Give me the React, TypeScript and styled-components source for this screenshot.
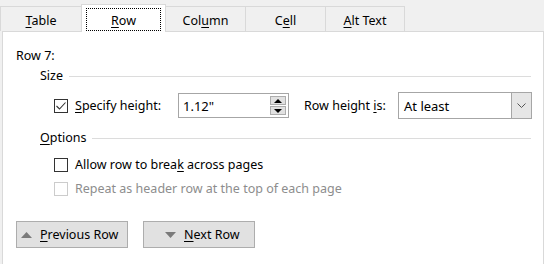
import { createGlobalStyle } from "styled-components";
import styled from "styled-components";

const Global = createGlobalStyle`
  body {
    margin: 0;
    background: #f0f0f0;
    font-family: "Noto Sans", "Open Sans", sans-serif;
    font-size: 12.5px;
    color: #000;
  }
  u {
    text-decoration: underline;
    text-underline-offset: 2px;
    text-decoration-thickness: 1px;
  }
`;

const Dialog = styled.div`
  width: 544px;
  height: 264px;
  overflow: hidden;
  background: #f0f0f0;
`;

const TabBar = styled.div`
  display: flex;
  align-items: flex-end;
  height: 31px;
`;

const Tab = styled.div<{ $w: number; $active?: boolean }>`
  position: relative;
  box-sizing: border-box;
  width: ${(p) => p.$w}px;
  height: ${(p) => (p.$active ? 28 : 25)}px;
  margin-bottom: ${(p) => (p.$active ? -1 : 0)}px;
  margin-right: -1px;
  border: 1px solid #d9d9d9;
  border-bottom: none;
  background: ${(p) => (p.$active ? "#fff" : "#f0f0f0")};
  z-index: ${(p) => (p.$active ? 2 : 1)};
  display: flex;
  align-items: center;
  justify-content: center;
  padding: ${(p) => (p.$active ? "3px 4px 1px" : "3px 0 0")};
`;

const Focus = styled.span`
  flex: 1;
  align-self: stretch;
  border: 1px dotted #000;
  display: flex;
  align-items: center;
  justify-content: center;
  padding-top: 1px;
`;

const Panel = styled.div`
  margin-left: 2px;
  height: 260px;
  border: 1px solid #d9d9d9;
  background: #fff;
  padding: 16px 0 0 13px;
`;

const Title = styled.div`
  line-height: 16px;
`;

const Group = styled.div`
  display: flex;
  align-items: center;
  line-height: 16px;
  margin-left: 24px;
  width: 491px;
  &::after {
    content: "";
    flex: 1;
    height: 1px;
    margin-left: 6px;
    margin-top: 1px;
    background: #dcdcdc;
  }
`;

const SizeRow = styled.div`
  display: flex;
  align-items: center;
  height: 27px;
  margin: 8px 0 0 38px;
`;

const Check = styled.label<{ $w?: number; $disabled?: boolean }>`
  display: flex;
  align-items: center;
  gap: 7px;
  width: ${(p) => (p.$w ? `${p.$w}px` : "auto")};
  color: ${(p) => (p.$disabled ? "#8d8d8d" : "#000")};
  line-height: 16px;
`;

const Box = styled.span<{ $disabled?: boolean }>`
  box-sizing: border-box;
  width: 14px;
  height: 14px;
  border: 1px solid ${(p) => (p.$disabled ? "#cccccc" : "#333333")};
  background: #fff;
  display: flex;
  align-items: center;
  justify-content: center;
`;

const Spin = styled.div`
  box-sizing: border-box;
  width: 111px;
  height: 25px;
  border: 1px solid #a6a6a6;
  display: flex;
  align-items: center;
  padding: 0 2px 0 4px;
`;

const SpinText = styled.span`
  flex: 1;
  font-size: 13px;
`;

const SpinButtons = styled.div`
  display: flex;
  flex-direction: column;
  gap: 1px;
`;

const SpinButton = styled.div`
  box-sizing: border-box;
  width: 16px;
  height: 9px;
  background: #e1e1e1;
  border: 1px solid #adadad;
  display: flex;
  align-items: center;
  justify-content: center;
`;

const FieldLabel = styled.span`
  margin-left: 15px;
  width: 94px;
  line-height: 16px;
`;

const Select = styled.div`
  box-sizing: border-box;
  width: 134px;
  height: 27px;
  border: 1px solid #a6a6a6;
  display: flex;
  align-items: stretch;
`;

const SelectText = styled.span`
  flex: 1;
  display: flex;
  align-items: center;
  padding-left: 5px;
  font-size: 13px;
`;

const SelectArrow = styled.span`
  width: 19px;
  border-left: 1px solid #a6a6a6;
  background: #e6e6e6;
  display: flex;
  align-items: center;
  justify-content: center;
`;

const OptionRow = styled.div<{ $top: number }>`
  margin: ${(p) => p.$top}px 0 0 38px;
`;

const Buttons = styled.div`
  display: flex;
  gap: 15px;
  margin-top: 24px;
`;

const Button = styled.div<{ $pad: number }>`
  box-sizing: border-box;
  width: 112px;
  height: 27px;
  background: #e1e1e1;
  border: 1px solid #adadad;
  display: flex;
  align-items: center;
  padding-left: ${(p) => p.$pad}px;
  gap: 8px;
`;

const Tri = ({ up, color = "#7a7a7a" }: { up?: boolean; color?: string }) => (
  <svg width="11" height="6" viewBox="0 0 11 6">
    <polygon points={up ? "0,6 11,6 5.5,0" : "0,0 11,0 5.5,6"} fill={color} />
  </svg>
);

const SmallTri = ({ up }: { up?: boolean }) => (
  <svg width="8" height="4" viewBox="0 0 8 4">
    <polygon points={up ? "0,4 8,4 4,0" : "0,0 8,0 4,4"} fill="#000" />
  </svg>
);

export default function App() {
  return (
    <Dialog>
      <Global />
      <TabBar>
        <Tab $w={82}>
          <span>
            <u>T</u>able
          </span>
        </Tab>
        <Tab $w={85} $active>
          <Focus>
            <span>
              <u>R</u>ow
            </span>
          </Focus>
        </Tab>
        <Tab $w={81}>
          <span>
            Col<u>u</u>mn
          </span>
        </Tab>
        <Tab $w={81}>
          <span>
            C<u>e</u>ll
          </span>
        </Tab>
        <Tab $w={80}>
          <span>
            <u>A</u>lt Text
          </span>
        </Tab>
      </TabBar>
      <Panel>
        <Title>Row 7:</Title>
        <Group style={{ marginTop: 4 }}>Size</Group>
        <SizeRow>
          <Check $w={124}>
            <Box>
              <svg width="12" height="12" viewBox="0 0 12 12">
                <polyline
                  points="1.5,6 4.5,9 10.5,2.5"
                  fill="none"
                  stroke="#333"
                  strokeWidth="1.1"
                />
              </svg>
            </Box>
            <span>
              <u>S</u>pecify height:
            </span>
          </Check>
          <Spin>
            <SpinText>1.12"</SpinText>
            <SpinButtons>
              <SpinButton>
                <SmallTri up />
              </SpinButton>
              <SpinButton>
                <SmallTri />
              </SpinButton>
            </SpinButtons>
          </Spin>
          <FieldLabel>
            Row height <u>i</u>s:
          </FieldLabel>
          <Select>
            <SelectText>At least</SelectText>
            <SelectArrow>
              <svg width="9" height="5" viewBox="0 0 9 5">
                <polyline points="0.5,0.5 4.5,4.5 8.5,0.5" fill="none" stroke="#555" strokeWidth="1" />
              </svg>
            </SelectArrow>
          </Select>
        </SizeRow>
        <Group style={{ marginTop: 11 }}>
          <span>
            <u>O</u>ptions
          </span>
        </Group>
        <OptionRow $top={11}>
          <Check>
            <Box />
            <span>
              Allow row to brea<u>k</u> across pages
            </span>
          </Check>
        </OptionRow>
        <OptionRow $top={8}>
          <Check $disabled>
            <Box $disabled />
            <span>Repeat as header row at the top of each page</span>
          </Check>
        </OptionRow>
        <Buttons>
          <Button $pad={4}>
            <Tri up />
            <span>
              <u>P</u>revious Row
            </span>
          </Button>
          <Button $pad={21}>
            <Tri />
            <span>
              <u>N</u>ext Row
            </span>
          </Button>
        </Buttons>
      </Panel>
    </Dialog>
  );
}
